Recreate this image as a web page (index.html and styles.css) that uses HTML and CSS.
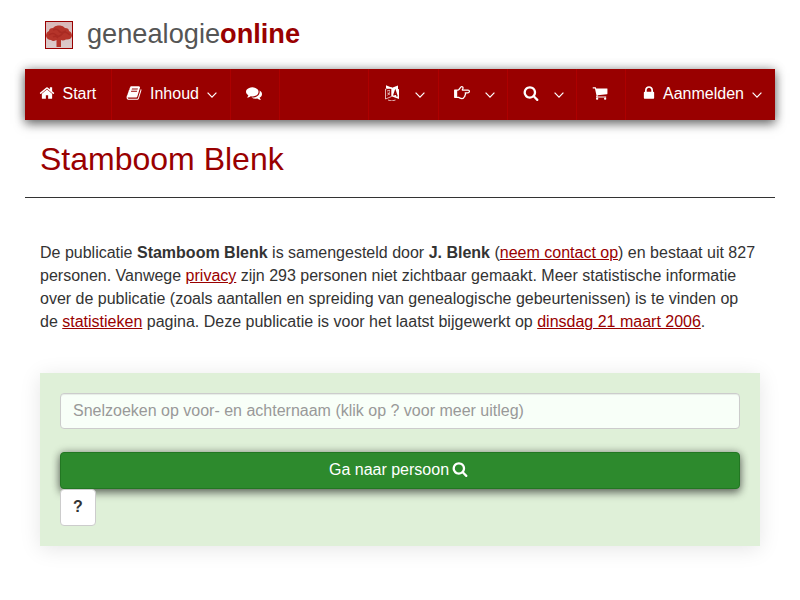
FILE: index.html
```html
<!DOCTYPE html>
<html lang="nl">
<head>
<meta charset="utf-8">
<title>Stamboom Blenk</title>
<link rel="stylesheet" href="styles.css">
</head>
<body>
<svg width="0" height="0" class="defs">
<symbol id="search" viewBox="0 0 1792 1792"><path d="M1216 832q0-185-131.500-316.500t-316.500-131.500-316.500 131.500-131.500 316.500 131.500 316.500 316.500 131.500 316.500-131.500 131.500-316.500zm512 832q0 52-38 90t-90 38q-54 0-90-38l-343-342q-179 124-399 124-143 0-273.500-55.500t-225-150-150-225-55.500-273.500 55.500-273.500 150-225 225-150 273.500-55.500 273.500 55.500 225 150 150 225 55.500 273.500q0 220-124 399l343 343q37 37 37 90z"/></symbol>
<symbol id="down" viewBox="0 0 10 6"><path d="M.6 .7L5 5.100 9.400 .7" fill="none" stroke="#fff" stroke-width="1.200"/></symbol>
</svg>
<div class="page">
<header class="brand">
<svg class="logo" viewBox="0 0 28 28">
<defs><linearGradient id="sky" x2="0" y2="1"><stop stop-color="#d9b9b9"/><stop offset="1" stop-color="#dccccc"/></linearGradient></defs>
<rect x=".5" y=".5" width="27" height="27" fill="url(#sky)" stroke="#900"/>
<path d="M1 15Q1 11 4 10Q4 7 8 7Q10 4 14 4.500Q18 4 20 7Q24 7 24 10Q27 11 27 15Q26 19 21 18.500Q18 20 16 19V26H11.500V19Q8 21 6 19Q2 19 1 15Z" fill="#b5342a"/>
<path d="M4 14Q8 11 11 14T17 13T25 14M8 9Q12 7 14 10T21 10M8 16Q11 14 13 17" fill="none" stroke="#981b17" stroke-width="1.500" opacity=".4"/>
</svg>
<div class="name">genealogie<b>online</b></div>
</header>
<nav class="nav">
<a class="start"><svg class="ic" viewBox="0 0 1792 1792"><path d="M1472 992v480q0 26-19 45t-45 19h-384v-384h-256v384h-384q-26 0-45-19t-19-45v-480q0-1 .5-3t.5-3l575-474 575 474q1 2 1 6zm223-69l-62 74q-8 9-21 11h-3q-13 0-21-7l-692-577-692 577q-12 8-24 7-13-2-21-11l-62-74q-8-10-7-23.500t11-21.500l719-599q32-26 76-26t76 26l244 204v-195q0-14 9-23t23-9h192q14 0 23 9t9 23v408l219 182q10 8 11 21.500t-7 23.500z"/></svg><span>Start</span></a>
<a class="inhoud"><svg class="ic" viewBox="0 0 1792 1792"><path d="M1703 478q40 57 18 129l-275 906q-19 64-76.500 107.500t-122.500 43.500h-923q-77 0-148.500-53.500t-99.500-131.500q-24-67-2-127 0-4 3-27t4-37q1-8-3-21.500t-3-19.500q2-11 8-21t16.500-23.500 16.500-23.500q23-38 45-91.500t30-91.500q3-10 .5-30t-.5-28q3-11 17-28t17-23q21-36 42-92t25-90q1-9-2.500-32t.5-28q4-13 22-30.500t22-22.500q19-26 42.500-84.500t27.500-96.500q1-8-3-25.500t-2-26.500q2-8 9-18t18-23 17-21q8-12 16.500-30.500t15-35 16-36 19.500-32 26.500-23.500 36-11.500 47.500 5.500l-1 3q38-9 51-9h761q74 0 114 56t18 130l-274 906q-36 119-71.500 153.500t-128.500 34.500h-869q-27 0-38 15-11 16-1 43 24 70 144 70h923q29 0 56-15.500t35-41.500l300-987q7-22 5-57 38 15 59 43zm-1064 2q-4 13 2 22.500t20 9.500h608q13 0 25.500-9.500t16.500-22.500l21-64q4-13-2-22.500t-20-9.500h-608q-13 0-25.500 9.500t-16.500 22.500zm-83 256q-4 13 2 22.500t20 9.500h608q13 0 25.500-9.500t16.500-22.500l21-64q4-13-2-22.500t-20-9.500h-608q-13 0-25.500 9.500t-16.500 22.500z"/></svg><span>Inhoud</span><svg class="down"><use href="#down"/></svg></a>
<a class="chat"><svg class="ic" viewBox="0 0 1792 1792"><path d="M1408 768q0 139-94 257t-256.500 186.500-353.500 68.500q-86 0-176-16-124 88-278 128-36 9-86 16h-3q-11 0-20.500-8t-11.500-21q-1-3-1-6.500t.5-6.500 2-6l2.500-5 3.500-5.500 4-5 4.500-5 4-4.500q5-6 23-25t26-29.500 22.500-29 25-38.500 20.500-44q-124-72-195-177t-71-224q0-139 94-257t256.500-186.500 353.500-68.500 353.500 68.500 256.500 186.500 94 257zm384 256q0 120-71 224.500t-195 176.500q10 24 20.500 44t25 38.500 22.500 29 26 29.500 23 25q1 1 4 4.500t4.500 5 4 5 3.500 5.500l2.500 5 2 6 .5 6.500-1 6.500q-3 14-13 22t-22 7q-50-7-86-16-154-40-278-128-90 16-176 16-271 0-472-132 58 4 88 4 161 0 309-45t264-129q125-92 192-212t67-254q0-77-23-152 129 71 204 178t75 230z"/></svg></a>
<a class="lang"><svg class="ic" viewBox="0 0 16 16"><path d="M2 .3L8 2.800 14 .5V4L15 4.300V14L8 11.500V4L2 3.200Z"/><path d="M1.500 4L7.500 2.500V11.500L1.500 14ZM3 6L6 5.300M3.300 10.500Q5.500 9 5.500 6.500M3.300 8L6 9.500M4 15Q8 17 11.500 15" fill="none" stroke="#fff" stroke-width=".7"/><path d="M9.700 10.500L11.300 5.700 13.200 11.500M10.300 9L12.500 9.600" fill="none" stroke="#900" stroke-width="1.300"/></svg><svg class="down"><use href="#down"/></svg></a>
<a class="hand"><svg class="ic wide" viewBox="0 0 16 16"><path d="M.7 5H4.300C5.800 4.500 6.300 1.600 7.600 1.600Q9.400 1.600 8.900 3.500L8.300 5H14Q15.400 5.200 15.400 6.400T14 7.800H11.200Q12 9.300 10.900 10.300 11.200 11.700 9.900 12.300 9.700 13.500 8 13.500 5.800 13.500 4.500 12.300H.7Z" fill="none" stroke="#fff" stroke-width="1.250" stroke-linejoin="round"/><path d="M.7 5H3.200V12.300H.7Z"/></svg><svg class="down"><use href="#down"/></svg></a>
<a class="zoek"><svg class="ic"><use href="#search"/></svg><svg class="down"><use href="#down"/></svg></a>
<a class="cart"><svg class="ic" viewBox="0 0 1792 1792"><path d="M704 1536q0 52-38 90t-90 38-90-38-38-90 38-90 90-38 90 38 38 90zm896 0q0 52-38 90t-90 38-90-38-38-90 38-90 90-38 90 38 38 90zm128-1088v512q0 24-16.500 42.500t-40.500 21.500l-1044 122q13 60 13 70 0 16-24 64h920q26 0 45 19t19 45-19 45-45 19h-1024q-26 0-45-19t-19-45q0-11 8-31.500t16-36 21.500-40 15.500-29.500l-177-823h-204q-26 0-45-19t-19-45 19-45 45-19h256q16 0 28.500 6.500t19.500 15.500 13 24.500 8 26 5.500 29.500 4.500 26h1201q26 0 45 19t19 45z"/></svg></a>
<a class="login"><svg class="ic" viewBox="0 0 1792 1792"><path d="M640 768h512v-192q0-106-75-181t-181-75-181 75-75 181v192zm832 96v576q0 40-28 68t-68 28h-960q-40 0-68-28t-28-68v-576q0-40 28-68t68-28h32v-192q0-184 132-316t316-132 316 132 132 316v192h32q40 0 68 28t28 68z"/></svg><span>Aanmelden</span><svg class="down"><use href="#down"/></svg></a>
</nav>
<h1>Stamboom Blenk</h1>
<main>
<p>De publicatie <b>Stamboom Blenk</b> is samengesteld door <b>J. Blenk</b> (<a href="#">neem contact op</a>) en bestaat uit 827 personen. Vanwege <a href="#">privacy</a> zijn 293 personen niet zichtbaar gemaakt. Meer statistische informatie over de publicatie (zoals aantallen en spreiding van genealogische gebeurtenissen) is te vinden op de <a href="#">statistieken</a> pagina. Deze publicatie is voor het laatst bijgewerkt op <a href="#">dinsdag 21 maart 2006</a>.</p>
<form class="panel">
<input type="text" placeholder="Snelzoeken op voor- en achternaam (klik op ? voor meer uitleg)">
<button type="button" class="go">Ga naar persoon <svg class="ic"><use href="#search"/></svg></button>
<button type="button" class="help">?</button>
</form>
</main>
</div>
</body>
</html>
```
FILE: styles.css
```css
* { box-sizing: border-box; }
body { margin: 0; background: #fff; color: #333; font: 16px/23px "Liberation Sans", Arial, sans-serif; }
.defs { position: absolute; }
.page { width: 750px; min-height: 600px; margin: 0 auto; }
.brand { height: 69px; padding: 0 0 0 20px; display: flex; align-items: flex-start; }
.logo { width: 28px; height: 28px; margin-top: 21px; }
.name { margin: 17px 0 0 14px; font-size: 27.2px; line-height: 34px; color: #555; white-space: nowrap; }
.name b { color: #900; }
.nav { display: flex; height: 51px; background: #900; box-shadow: 0 4px 10px rgba(0,0,0,.5), 0 0 10px rgba(0,0,0,.25); color: #fff; }
.nav a { display: flex; align-items: center; height: 51px; padding: 0 0 2px 15px; border-right: 1px solid #ad0000; }
.ic { width: 16px; height: 16px; fill: #fff; flex: none; }
.nav .ic { margin-bottom: 1px; }
.down { width: 10px; height: 6px; margin-top: 2px; flex: none; }
.nav .start { width: 87px; padding-left: 14px; }
.start span { margin-left: 7.500px; }
.nav .inhoud { width: 119px; padding-left: 14px; }
.inhoud span { margin: 0 8px 0 8px; }
.nav .chat { width: 49px; }
.nav .lang { width: 71px; margin-left: auto; border-left: 1px solid #ad0000; }
.lang .down { margin-left: 15px; }
.hand .down, .zoek .down { margin-left: 14.500px; }
.nav .hand, .nav .zoek { width: 69px; }
.nav .cart { width: 49px; }
.nav .login { width: 149px; border: 0; }
.login span { margin: 0 8px 0 6px; }
h1 { margin: 0; height: 78px; padding: 21px 15px 0; border-bottom: 1px solid #333; font-size: 32px; line-height: 36px; font-weight: 400; color: #900; }
main { padding: 43px 15px 0; }
p { margin: 0; }
p a { color: #900; text-decoration: underline; }
.panel { margin-top: 40px; height: 173px; padding: 20px; background: #dff0d8; box-shadow: 0 3px 20px rgba(0,0,0,.1); }
input { display: block; width: 100%; height: 36px; padding: 6px 12px; border: 1px solid #ccc; border-radius: 4px; background: #f8fff8; box-shadow: inset 0 1px 1px rgba(0,0,0,.075); font: inherit; }
input::placeholder { color: #999; opacity: 1; }
.go { display: flex; align-items: center; justify-content: center; width: 100%; height: 37px; margin-top: 23px; padding: 0 3px 2px 0; border: 1px solid #227722; border-radius: 4px; background: #2d8a2d; color: #fff; font: inherit; box-shadow: 0 4px 8px rgba(0,0,0,.45), 0 0 8px rgba(0,0,0,.3); }
.go .ic { margin: 0 0 1px 3px; }
.help { display: block; position: relative; width: 36px; height: 37px; padding: 0 0 2px; border: 1px solid #ccc; border-radius: 4px; background: #fff; color: #333; font: inherit; font-weight: 700; }
```
